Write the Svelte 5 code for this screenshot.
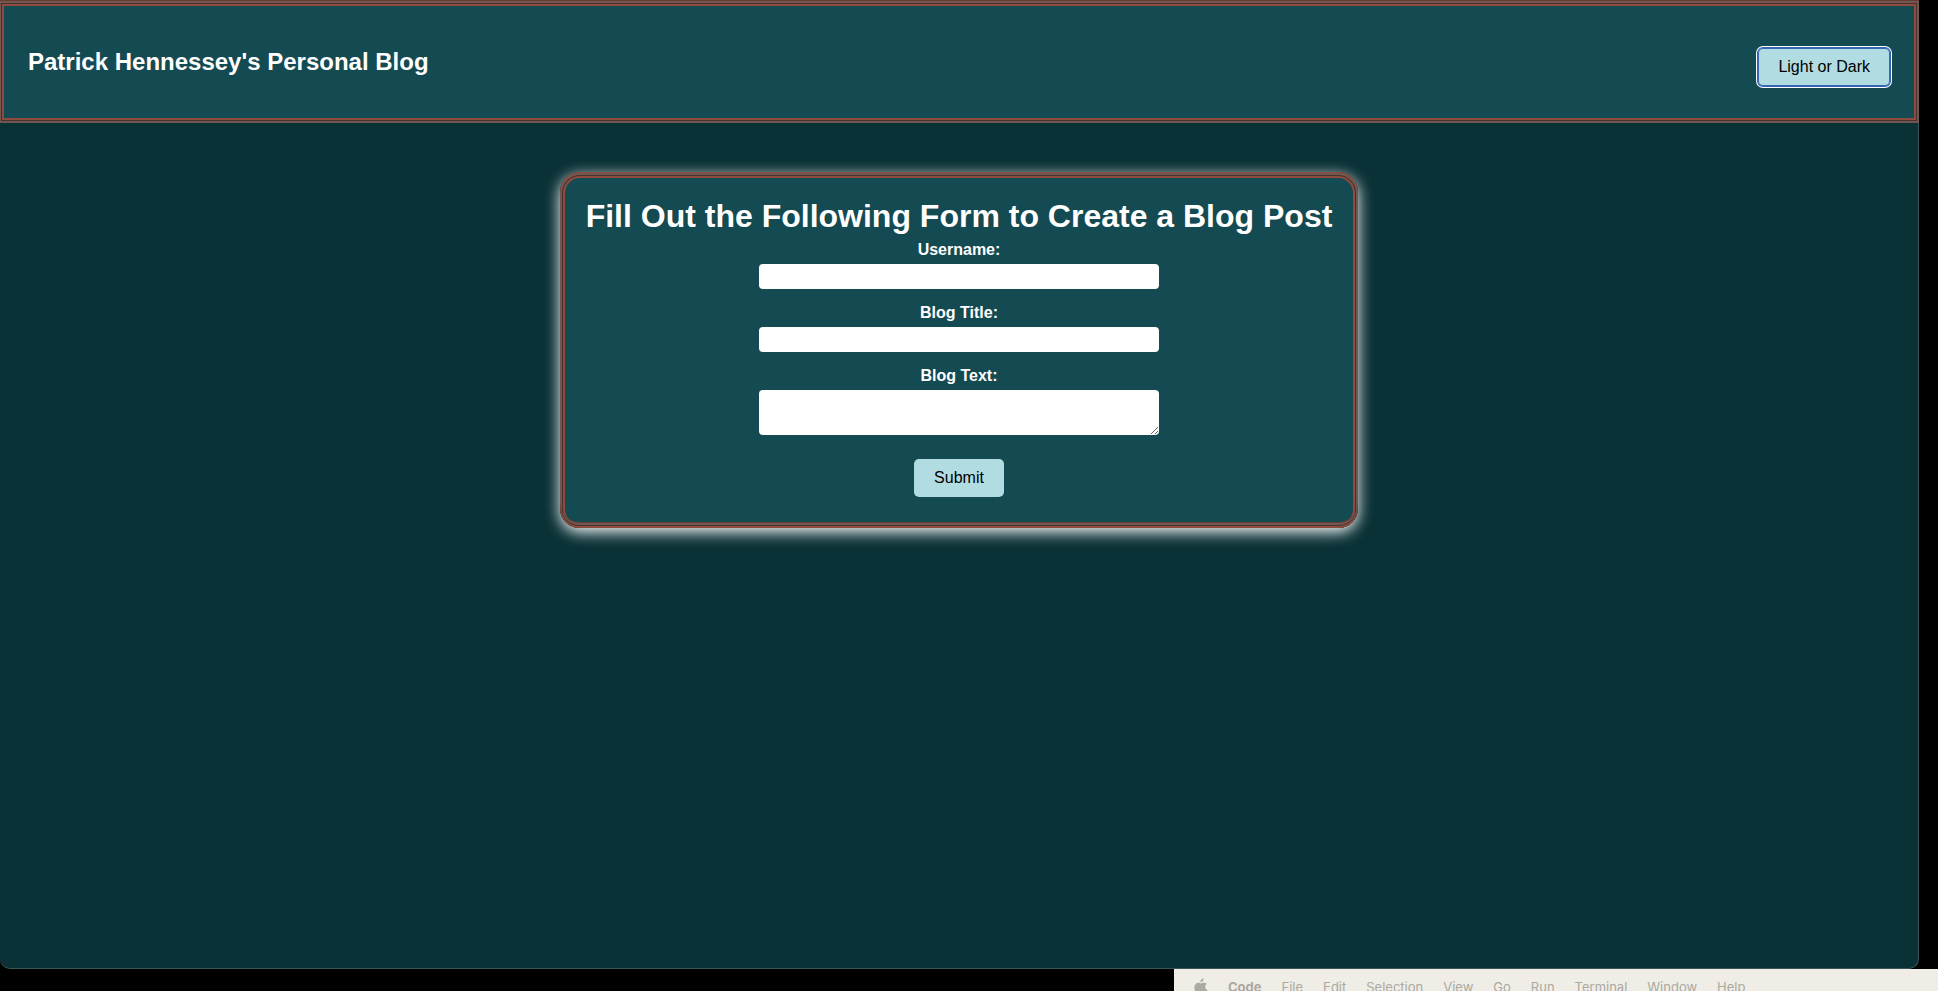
<script>
  let dark = $state(true);
  let username = $state('');
  let title = $state('');
  let content = $state('');
  const menus = ['File', 'Edit', 'Selection', 'View', 'Go', 'Run', 'Terminal', 'Window', 'Help'];
</script>

<div class="desktop">
  <div class="page" class:light={!dark}>
    <header>
      <h2>Patrick Hennessey's Personal Blog</h2>
      <button type="button" class="toggle" onclick={() => (dark = !dark)}>Light or Dark</button>
    </header>
    <main>
      <form onsubmit={(e) => e.preventDefault()}>
        <h1>Fill Out the Following Form to Create a Blog Post</h1>
        <label for="username">Username:</label>
        <input id="username" type="text" bind:value={username} />
        <label for="title">Blog Title:</label>
        <input id="title" type="text" bind:value={title} />
        <label for="content">Blog Text:</label>
        <textarea id="content" rows="2" bind:value={content}></textarea>
        <button type="submit">Submit</button>
      </form>
    </main>
  </div>
  <nav class="menubar">
    <svg viewBox="0 0 14 17" width="14" height="17" aria-hidden="true">
      <path d="M9.7 0.2c.1 1-.3 2-.9 2.700-.6.8-1.500 1.300-2.400 1.200-.1-1 .3-2 .9-2.600C8 .8 8.900.3 9.700.2z" />
      <path d="M12.900 5.800c-1.100.7-1.700 1.700-1.700 2.900 0 1.500.9 2.700 2.200 3.200-.3.9-.7 1.700-1.300 2.500-.7 1-1.400 1.900-2.500 1.900s-1.400-.6-2.600-.6-1.600.6-2.600.6-1.800-1-2.500-2C.5 12.300-.3 9.100 1 6.900c.7-1.300 2-2.100 3.300-2.100 1.200 0 2 .7 2.900.7s1.700-.8 3.100-.7c1 0 2 .4 2.600 1z" />
    </svg>
    <strong>Code</strong>
    {#each menus as item}<span>{item}</span>{/each}
  </nav>
</div>

<style>
  :global(body) {
    margin: 0;
    background: #000;
  }
  .desktop {
    display: flex;
    flex-direction: column;
    height: 100vh;
    overflow: hidden;
    font-family: "Liberation Sans", Arial, sans-serif;
  }
  .page {
    box-sizing: border-box;
    flex: 1;
    margin-right: 19px;
    border: solid #3c5557;
    border-width: 0 1px 1px 0;
    border-radius: 0 0 10px 10px;
    background: #0a3136;
    color: #fff;
  }
  .page.light {
    background: #e4f3f5;
  }
  header {
    display: flex;
    justify-content: space-between;
    align-items: center;
    box-sizing: border-box;
    height: 123px;
    margin: 0 -1px;
    padding: 9px 29px 0;
    border-top: 1px solid #6b3a30;
    background: #144a51;
    box-shadow:
      inset 0 0 0 2px #6f5852,
      inset 0 0 0 3px #49312e,
      inset 0 0 0 5px #8e4b3e;
  }
  h1,
  h2 {
    margin: 0;
    font-weight: 700;
  }
  h2 {
    margin-bottom: 10px;
    font-size: 24px;
    line-height: 28px;
  }
  h1 {
    font-size: 32px;
    line-height: 36px;
  }
  button {
    padding: 10px 20px;
    border: 0;
    border-radius: 5px;
    background: #b0dce2;
    color: #000;
    font: 16px/18px "Liberation Sans", Arial, sans-serif;
    cursor: pointer;
  }
  .toggle {
    box-shadow:
      0 0 0 1px #3565b5,
      0 0 0 2px #fff,
      inset 0 0 0 1px #3565b5;
  }
  main {
    display: flex;
    justify-content: center;
    padding-top: 49px;
  }
  /* Ridged frame: the bands reverse their order along the bottom edge. */
  form {
    display: flex;
    flex-direction: column;
    align-items: center;
    padding: 26px 26px 31px;
    border-radius: 20px;
    background: #144a51;
    box-shadow:
      inset 0 1px #8e4b3e,
      inset 0 -2px #8e4b3e,
      inset 0 -3px #49312e,
      inset 0 -5px #6f5852,
      inset 0 -6px #6b3a30,
      inset 0 1px 0 2px #6f5852,
      inset 0 1px 0 3px #49312e,
      inset 0 1px 0 5px #8e4b3e,
      0 4px 15px #fff;
  }
  label {
    margin: 6px 0 4px;
    font-size: 16px;
    font-weight: 700;
    line-height: 20px;
  }
  input,
  textarea {
    box-sizing: border-box;
    width: 400px;
    margin: 0 0 8px;
    padding: 2px;
    border: 0;
    border-radius: 4px;
    background: #fff;
    font: 16px/20px "Liberation Sans", Arial, sans-serif;
  }
  input {
    height: 25px;
  }
  textarea {
    height: 45px;
    margin-bottom: 24px;
    resize: both;
  }
  .menubar {
    display: flex;
    flex: none;
    align-self: flex-end;
    box-sizing: border-box;
    width: 764px;
    height: 22px;
    gap: 20px;
    padding: 9px 20px 0;
    overflow: hidden;
    background: #f0ede6;
    color: #aaa9a2;
    font: 13px/18px Inter, sans-serif;
  }
  .menubar svg {
    flex: none;
    fill: #aaa9a2;
  }
</style>
